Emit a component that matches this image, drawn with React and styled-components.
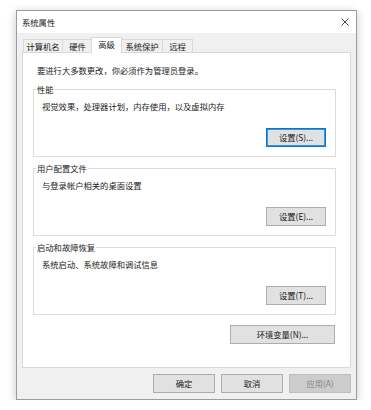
import React from 'react';
import styled, { createGlobalStyle } from 'styled-components';

const GlobalStyle = createGlobalStyle`
	html, body {
		margin: 0;
		background: #fff;
	}

	body {
		font-family: "Noto Sans CJK SC", "Noto Sans", sans-serif;
		font-size: 8.3px;
		color: #1a1a1a;
	}
`;

const Window = styled.div`
	box-sizing: border-box;
	width: 341px;
	margin: 10px 0 0 16px;
	border: 1px solid #9c9c9c;
	background: #f0f0f0;
	box-shadow: 0 2px 9px rgba( 0, 0, 0, 0.22 );
	display: flex;
	flex-direction: column;
`;

const TitleBar = styled.div`
	height: 22px;
	background: #fff;
	display: flex;
	align-items: center;
	justify-content: space-between;
	padding: 0 7px 0 5px;
	line-height: 12px;
`;

const CloseIcon = () => (
	<svg width="8" height="8" viewBox="0 0 8 8">
		<path d="M0.5 0.5 L7.5 7.5 M7.5 0.5 L0.5 7.5" stroke="#2b2b2b" strokeWidth="0.9" fill="none" />
	</svg>
);

const Client = styled.div`
	padding: 4px 5px 6px;
	display: flex;
	flex-direction: column;
`;

const TabRow = styled.div`
	display: flex;
	align-items: flex-end;
	height: 16px;
	padding-left: 1px;
	margin-bottom: -1px;
	position: relative;
	z-index: 1;
`;

const Tab = styled.div`
	box-sizing: border-box;
	position: relative;
	z-index: ${ p => p.$active ? 2 : 1 };
	width: ${ p => p.$w }px;
	height: ${ p => p.$active ? 16 : 13 }px;
	margin: 0 0 ${ p => p.$active ? 0 : 1 }px ${ p => p.$ml || 0 }px;
	padding-bottom: ${ p => p.$active ? 2 : 0 }px;
	display: flex;
	align-items: center;
	justify-content: center;
	background: ${ p => p.$active ? '#fff' : '#f0f0f0' };
	border: 1px solid #d9d9d9;
	border-bottom: none;
	white-space: nowrap;
	line-height: 11px;
`;

const Panel = styled.div`
	border: 1px solid #d9d9d9;
	background: #fff;
	padding: 11px 14px 23px 10px;
	display: flex;
	flex-direction: column;
`;

const Intro = styled.div`
	margin-left: 4px;
	line-height: 12px;
	height: 12px;
`;

const Group = styled.fieldset`
	min-width: 0;
	margin: ${ p => p.$mt }px 0 0;
	padding: 5px 9px 9px 7px;
	border: 1px solid #dcdcdc;
	display: flex;
	flex-direction: column;
`;

const Legend = styled.legend`
	padding: 0 1px;
	margin-left: -5px;
	line-height: 12px;
`;

const Description = styled.div`
	padding-left: 1px;
	line-height: 12px;
	height: 12px;
`;

const ButtonRow = styled.div`
	display: flex;
	justify-content: flex-end;
	gap: 6px;
	margin-top: ${ p => p.$mt || 0 }px;
	padding-right: ${ p => p.$pr || 0 }px;
`;

const Button = styled.button`
	box-sizing: border-box;
	width: ${ p => p.$w || 60 }px;
	height: 19px;
	padding: 0;
	font: inherit;
	line-height: 17px;
	color: ${ p => p.disabled ? '#838383' : '#1a1a1a' };
	background: ${ p => p.disabled ? '#cccccc' : '#e1e1e1' };
	border: 1px solid ${ p => p.$focused ? '#0078d7' : p.disabled ? '#bfbfbf' : '#adadad' };
	box-shadow: ${ p => p.$focused ? 'inset 0 0 0 1px #3c93de' : 'none' };
	white-space: nowrap;
`;

const tabs = [
	{ label: '计算机名', w: 40, ml: 0 },
	{ label: '硬件', w: 31, ml: -1 },
	{ label: '高级', w: 31, ml: -2, active: true },
	{ label: '系统保护', w: 42, ml: -1 },
	{ label: '远程', w: 31, ml: -1 },
];

const groups = [
	{ title: '性能', text: '视觉效果，处理器计划，内存使用，以及虚拟内存', button: '设置(S)...', mt: 7, focused: true },
	{ title: '用户配置文件', text: '与登录帐户相关的桌面设置', button: '设置(E)...', mt: 5 },
	{ title: '启动和故障恢复', text: '系统启动、系统故障和调试信息', button: '设置(T)...', mt: 5 },
];

export default function App() {
	return (
		<>
			<GlobalStyle />
			<Window>
				<TitleBar>
					<span>系统属性</span>
					<CloseIcon />
				</TitleBar>

				<Client>
					<TabRow>
						{ tabs.map( tab => (
							<Tab key={ tab.label } $w={ tab.w } $ml={ tab.ml } $active={ tab.active }>
								{ tab.label }
							</Tab>
						) ) }
					</TabRow>

					<Panel>
						<Intro>要进行大多数更改，你必须作为管理员登录。</Intro>

						{ groups.map( group => (
							<Group key={ group.title } $mt={ group.mt }>
								<Legend>{ group.title }</Legend>
								<Description>{ group.text }</Description>
								<ButtonRow $mt={ 16 }>
									<Button $focused={ group.focused }>{ group.button }</Button>
								</ButtonRow>
							</Group>
						) ) }

						<ButtonRow $mt={ 10 } $pr={ 1 }>
							<Button $w={ 105 }>环境变量(N)...</Button>
						</ButtonRow>
					</Panel>

					<ButtonRow $mt={ 6 }>
						<Button $w={ 62 }>确定</Button>
						<Button $w={ 62 }>取消</Button>
						<Button $w={ 62 } disabled>应用(A)</Button>
					</ButtonRow>
				</Client>
			</Window>
		</>
	);
}
